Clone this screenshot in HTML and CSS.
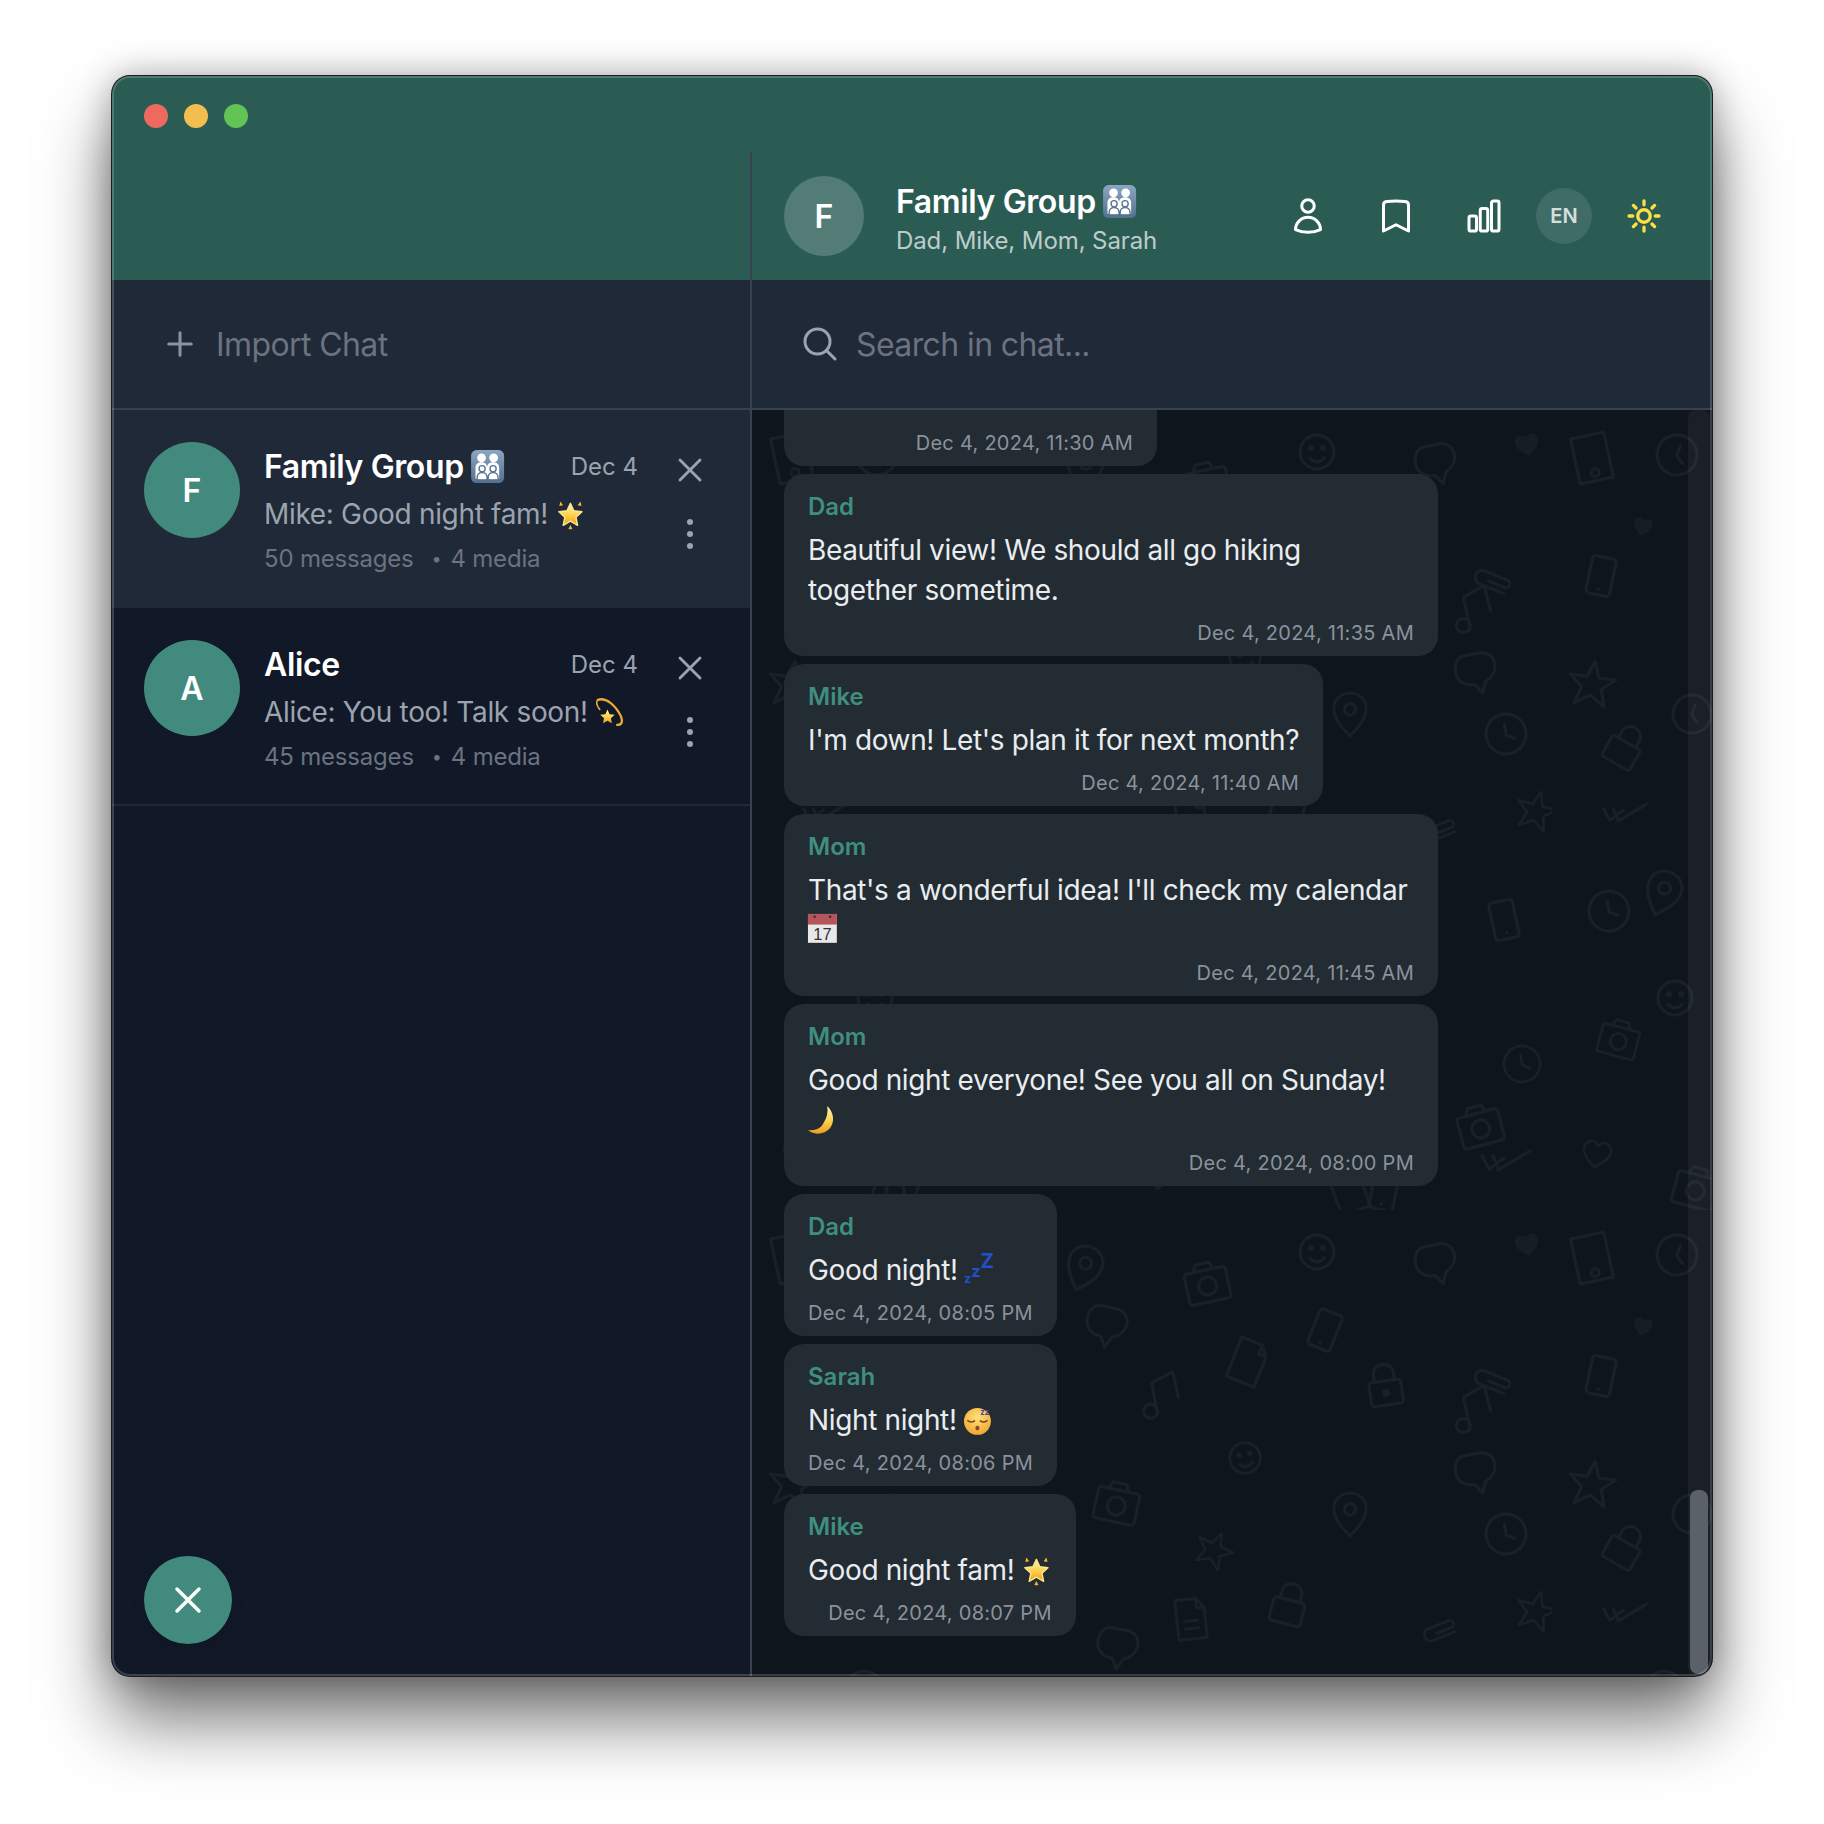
FILE: index.html
```html
<!doctype html>
<html lang="en">
<head>
  <title>Chat Viewer</title>
  <meta charset="UTF-8">
  <meta name="viewport" content="width=device-width, initial-scale=1">
  <link rel="stylesheet" href="styles.css">
</head>
<body>
  <!-- emoji drawings, used from the text below -->
  <svg class="sprite" aria-hidden="true">
    <defs>
      <linearGradient id="g-family" x1="0" y1="0" x2="0" y2="1">
        <stop offset="0" stop-color="#8ba6c0"/><stop offset="1" stop-color="#54708f"/>
      </linearGradient>
      <linearGradient id="g-gold" x1="0" y1="0" x2="0" y2="1">
        <stop offset="0" stop-color="#fff6b8"/><stop offset=".55" stop-color="#fdd04a"/><stop offset="1" stop-color="#ee9a1c"/>
      </linearGradient>
      <radialGradient id="g-face" cx=".5" cy=".35" r=".7">
        <stop offset="0" stop-color="#ffe27a"/><stop offset="1" stop-color="#f2a22a"/>
      </radialGradient>
    </defs>
    <symbol id="e-family" viewBox="0 0 32 32">
      <rect x="1" y="1" width="30" height="30" rx="5" fill="url(#g-family)"/>
      <g fill="#fff">
        <circle cx="10.5" cy="8" r="4"/><circle cx="21.5" cy="8" r="4"/>
        <path d="M5 27V17c0-3 2-5 5.500-5s5 2 5 5c0-3 2-5 5.500-5s5.500 2 5.500 5v10z"/>
      </g>
      <g fill="#fff" stroke="#54708f" stroke-width="1.200">
        <circle cx="11" cy="18" r="2.800"/><circle cx="21" cy="18" r="2.800"/>
        <path d="M6.500 28v-2c0-3 2-4.500 4.500-4.500s4.500 1.500 4.500 4.500v2zM16.500 28v-2c0-3 2-4.500 4.500-4.500s4.500 1.500 4.500 4.500v2z"/>
      </g>
    </symbol>
    <symbol id="e-star" viewBox="0 0 32 32">
      <path d="M16 4.500l3.600 7.800 8.400 1-6.200 5.700 1.700 8.300-7.500-4.200-7.500 4.200 1.700-8.300L4 13.300l8.400-1z" fill="url(#g-gold)" stroke="#fde68a" stroke-width="1.500" stroke-linejoin="round"/>
      <path d="M5.500 2.500l3 4-4 .8zM26.500 2.500l-3 4 4 .8zM16 27l2.200 4.500h-4.400z" fill="#f7b733"/>
    </symbol>
    <symbol id="e-dizzy" viewBox="0 0 32 32">
      <path d="M4 3c8-3 18 5 24 17 2 6 1 9-4 9" fill="none" stroke="#eca92b" stroke-width="2.400" stroke-linecap="round"/>
      <path d="M4 3c-2 2-1 6 2 10" fill="none" stroke="#eca92b" stroke-width="1.600" stroke-linecap="round"/>
      <path d="M14 13l2.200 4.900 5.300.6-3.900 3.600 1 5.200-4.600-2.600-4.600 2.600 1-5.200-3.900-3.600 5.300-.6z" fill="url(#g-gold)"/>
    </symbol>
    <symbol id="e-moon" viewBox="0 0 32 32">
      <path d="M21 1c7 7 8 16 3 23-6 7-16 8-23 2 7 1 13-1 16-7 4-6 5-12 4-18z" fill="url(#g-gold)"/>
    </symbol>
    <!-- wallpaper doodles, drawn around 0,0 -->
    <defs>
      <g id="d-pin"><path d="M0-22c-10 0-17 7-17 16C-17 6-7 16 0 23 7 16 17 6 17-6 17-15 10-22 0-22z"/><circle cy="-5" r="6"/></g>
      <g id="d-camera"><rect x="-21" y="-13" width="42" height="32" rx="3"/><path d="M-11-13l3-7h14l3 7"/><circle cy="3" r="9"/></g>
      <g id="d-smile"><circle r="17"/><circle cx="-6" cy="-4" r="3" class="solid"/><circle cx="6" cy="-4" r="3" class="solid"/><path d="M-7 6c3 5 11 5 14 0"/></g>
      <g id="d-bubble"><path d="M-9-19H7C15-19 20-13 20-6S15 7 8 10L3 21-3 11C-13 11-20 5-20-4S-15-19-9-19z"/></g>
      <g id="d-heart"><path class="solid-faint" d="M0 18C-10 10-17 4-17-4-17-10-12-14-8-14-4-14-2-12 0-9 2-12 4-14 8-14 12-14 17-10 17-4 17 4 10 10 0 18z"/></g>
      <g id="d-heartline"><path d="M0 18C-10 10-17 4-17-4-17-10-12-14-8-14-4-14-2-12 0-9 2-12 4-14 8-14 12-14 17-10 17-4 17 4 10 10 0 18z"/></g>
      <g id="d-tablet"><rect x="-17" y="-23" width="34" height="46"/><circle cy="15" r="4"/></g>
      <g id="d-clock"><circle r="20"/><path d="M0-10V1L8 6"/></g>
      <g id="d-phone"><rect x="-12" y="-19" width="24" height="38" rx="3"/><circle cy="13" r="1.500" class="solid"/></g>
      <g id="d-file"><path d="M-15-21H7L15-11V21H-15zM7-21V-11H15"/></g>
      <g id="d-doc"><path d="M-15-21H7L15-11V21H-15zM7-21V-11H15M-7 2H7M-7 10H7"/></g>
      <g id="d-music"><circle cx="-12" cy="16" r="7"/><path d="M-6 16L-8-12 14-21 17 5"/></g>
      <g id="d-lock"><rect x="-16" y="-4" width="32" height="24" rx="3"/><path d="M-10-4V-11C-10-24 10-24 10-11V-4"/></g>
      <g id="d-lockdot"><rect x="-16" y="-4" width="32" height="24" rx="3"/><path d="M-10-4V-11C-10-24 10-24 10-11V-4"/><circle cy="8" r="4" class="solid"/></g>
      <g id="d-clip"><path d="M-5 3H12C18 3 18-5 12-5H-12C-21-5-21 9-12 9H14"/></g>
      <g id="d-star"><path d="M0-23L6-7 23-7 10 4 15 21 0 11-15 21-10 4-23-7-6-7z"/></g>
      <g id="d-check"><path d="M-24-5L-17 8-2-3M-8 9L24-10M-13-5L-7 9"/></g>
      <pattern id="doodles" x="0" y="0" width="800" height="800" patternUnits="userSpaceOnUse">
        <g class="doodle">
          <use href="#d-pin" transform="translate(332 58) rotate(20)"/>
          <use href="#d-camera" transform="translate(455 73) rotate(-12)"/>
          <use href="#d-smile" transform="translate(565 42)"/>
          <use href="#d-bubble" transform="translate(684 54) rotate(-12)"/>
          <use href="#d-heart" transform="translate(775 34) rotate(-10) scale(.68)"/>
          <use href="#d-tablet" transform="translate(40 48) rotate(-12)"/>
          <use href="#d-clock" transform="translate(125 45) rotate(20)"/>
          <use href="#d-bubble" transform="translate(354 116) rotate(12)"/>
          <use href="#d-phone" transform="translate(573 120) rotate(22)"/>
          <use href="#d-file" transform="translate(496 152) rotate(22)"/>
          <use href="#d-heart" transform="translate(91 116) rotate(15) scale(.55)"/>
          <use href="#d-phone" transform="translate(49 166) rotate(12)"/>
          <use href="#d-music" transform="translate(409 184) rotate(-6)"/>
          <use href="#d-lockdot" transform="translate(633 175) rotate(-8)"/>
          <use href="#d-clip" transform="translate(742 170) rotate(22)"/>
          <use href="#d-music" transform="translate(721 198) rotate(-8)"/>
          <use href="#d-smile" transform="translate(493 248) rotate(-10) scale(.9)"/>
          <use href="#d-bubble" transform="translate(724 263) rotate(-10)"/>
          <use href="#d-star" transform="translate(40 274) rotate(8)"/>
          <use href="#d-camera" transform="translate(365 293) rotate(12)"/>
          <use href="#d-pin" transform="translate(598 304) scale(.95)"/>
          <use href="#d-clock" transform="translate(754 324) rotate(-10)"/>
          <use href="#d-lock" transform="translate(73 336) rotate(30)"/>
          <use href="#d-clock" transform="translate(140 304) rotate(20) scale(.95)"/>
          <use href="#d-star" transform="translate(462 340) rotate(25) scale(.8)"/>
          <use href="#d-lock" transform="translate(537 394) rotate(15)"/>
          <use href="#d-doc" transform="translate(439 409) rotate(-6) scale(.95)"/>
          <use href="#d-clip" transform="translate(688 419) rotate(-22) scale(.9)"/>
          <use href="#d-star" transform="translate(784 401) rotate(15) scale(.85)"/>
          <use href="#d-check" transform="translate(73 403) scale(.9)"/>
          <use href="#d-bubble" transform="translate(365 438) rotate(10)"/>
          <use href="#d-pin" transform="translate(111 483) rotate(20)"/>
          <use href="#d-clock" transform="translate(57 501) rotate(-10)"/>
          <use href="#d-phone" transform="translate(752 510) rotate(-12)"/>
          <use href="#d-smile" transform="translate(123 588)"/>
          <use href="#d-camera" transform="translate(67 629) rotate(15) scale(.9)"/>
          <use href="#d-clock" transform="translate(770 654) rotate(-10) scale(.9)"/>
          <use href="#d-camera" transform="translate(728 716) rotate(-15)"/>
          <use href="#d-heartline" transform="translate(45 743) rotate(10) scale(.8)"/>
          <use href="#d-check" transform="translate(754 751)"/>
          <use href="#d-camera" transform="translate(144 778) rotate(15)"/>
          <use href="#d-pin" transform="translate(406 756)"/>
          <use href="#d-file" transform="translate(597 781) rotate(-20)"/>
          <use href="#d-phone" transform="translate(632 781) rotate(12)"/>
        </g>
      </pattern>
    </defs>
  </svg>

  <div class="window">
    <div class="titlebar">
      <span class="light light-red"></span>
      <span class="light light-yellow"></span>
      <span class="light light-green"></span>
    </div>
    <div class="panes">
      <aside class="sidebar">
        <div class="sidebar-top"></div>
        <div class="import-row">
          <svg class="icon-import" viewBox="0 0 24 24"><path d="M12 4.500v15m7.500-7.500h-15"/></svg>
          <span class="import-text">Import Chat</span>
        </div>
        <div class="chat-item chat-item-active">
          <div class="avatar">F</div>
          <div class="chat-info">
            <div class="chat-row">
              <span class="chat-name">Family Group <svg class="emoji" role="img" aria-label="family"><use href="#e-family"/></svg></span>
              <span class="chat-date">Dec 4</span>
            </div>
            <div class="chat-preview">Mike: Good night fam! <svg class="emoji" role="img" aria-label="glowing star"><use href="#e-star"/></svg></div>
            <div class="chat-meta"><span>50 messages</span><span class="meta-sep">•</span><span>4 media</span></div>
          </div>
          <div class="chat-actions">
            <svg class="icon-action" viewBox="0 0 24 24"><path d="M6 18 18 6M6 6l12 12"/></svg>
            <svg class="icon-action icon-dots" viewBox="0 0 40 40"><circle cx="20" cy="8" r="3"/><circle cx="20" cy="20" r="3"/><circle cx="20" cy="32" r="3"/></svg>
          </div>
        </div>
        <div class="chat-item">
          <div class="avatar">A</div>
          <div class="chat-info">
            <div class="chat-row">
              <span class="chat-name">Alice</span>
              <span class="chat-date">Dec 4</span>
            </div>
            <div class="chat-preview">Alice: You too! Talk soon! <svg class="emoji" role="img" aria-label="dizzy"><use href="#e-dizzy"/></svg></div>
            <div class="chat-meta"><span>45 messages</span><span class="meta-sep">•</span><span>4 media</span></div>
          </div>
          <div class="chat-actions">
            <svg class="icon-action" viewBox="0 0 24 24"><path d="M6 18 18 6M6 6l12 12"/></svg>
            <svg class="icon-action icon-dots" viewBox="0 0 40 40"><circle cx="20" cy="8" r="3"/><circle cx="20" cy="20" r="3"/><circle cx="20" cy="32" r="3"/></svg>
          </div>
        </div>
        <button type="button" class="fab">
          <svg viewBox="0 0 24 24"><path d="M6 18 18 6M6 6l12 12"/></svg>
        </button>
      </aside>

      <main class="chat">
        <header class="chat-header">
          <div class="header-avatar">F</div>
          <div class="header-info">
            <div class="header-title">Family Group <svg class="emoji" role="img" aria-label="family"><use href="#e-family"/></svg></div>
            <div class="header-members">Dad, Mike, Mom, Sarah</div>
          </div>
          <div class="header-actions">
            <button type="button" class="header-btn">
              <svg viewBox="0 0 24 24"><path d="M15.750 6a3.750 3.750 0 1 1-7.500 0 3.750 3.750 0 0 1 7.500 0ZM4.501 20.118a7.500 7.500 0 0 1 14.998 0A17.933 17.933 0 0 1 12 21.750c-2.676 0-5.216-.584-7.499-1.632Z"/></svg>
            </button>
            <button type="button" class="header-btn">
              <svg viewBox="0 0 24 24"><path d="M17.593 3.322c1.100.128 1.907 1.077 1.907 2.185V21L12 17.250 4.500 21V5.507c0-1.108.806-2.057 1.907-2.185a48.507 48.507 0 0 1 11.186 0Z"/></svg>
            </button>
            <button type="button" class="header-btn">
              <svg viewBox="0 0 24 24"><path d="M3 13.125C3 12.504 3.504 12 4.125 12h2.250c.621 0 1.125.504 1.125 1.125v6.750C7.500 20.496 6.996 21 6.375 21h-2.250A1.125 1.125 0 0 1 3 19.875v-6.750ZM9.750 8.625c0-.621.504-1.125 1.125-1.125h2.250c.621 0 1.125.504 1.125 1.125v11.250c0 .621-.504 1.125-1.125 1.125h-2.250a1.125 1.125 0 0 1-1.125-1.125V8.625ZM16.500 4.125c0-.621.504-1.125 1.125-1.125h2.250C20.496 3 21 3.504 21 4.125v15.750c0 .621-.504 1.125-1.125 1.125h-2.250a1.125 1.125 0 0 1-1.125-1.125V4.125Z"/></svg>
            </button>
            <div class="lang-btn">EN</div>
            <button type="button" class="header-btn header-btn-sun">
              <svg viewBox="0 0 24 24"><path d="M12 3v2.250m6.364.386-1.591 1.591M21 12h-2.250m-.386 6.364-1.591-1.591M12 18.750V21m-4.773-4.227-1.591 1.591M5.250 12H3m4.227-4.773L5.636 5.636M15.750 12a3.750 3.750 0 1 1-7.500 0 3.750 3.750 0 0 1 7.500 0Z"/></svg>
            </button>
          </div>
        </header>
        <div class="search-row">
          <svg class="icon-search" viewBox="0 0 24 24"><path d="m21 21-5.197-5.197m0 0A7.500 7.500 0 1 0 5.196 5.196a7.500 7.500 0 0 0 10.607 10.607Z"/></svg>
          <span class="search-text">Search in chat...</span>
        </div>
        <div class="messages">
          <svg class="wallpaper" aria-hidden="true"><rect width="100%" height="100%" fill="url(#doodles)"/></svg>
          <div class="msg msg-cut">
            <div class="msg-time">Dec 4, 2024, 11:30 AM</div>
          </div>
          <div class="msg">
            <div class="msg-sender">Dad</div>
            <div class="msg-text">Beautiful view! We should all go hiking together sometime.</div>
            <div class="msg-time">Dec 4, 2024, 11:35 AM</div>
          </div>
          <div class="msg">
            <div class="msg-sender">Mike</div>
            <div class="msg-text">I'm down! Let's plan it for next month?</div>
            <div class="msg-time">Dec 4, 2024, 11:40 AM</div>
          </div>
          <div class="msg">
            <div class="msg-sender">Mom</div>
            <div class="msg-text">That's a wonderful idea! I'll check my calendar <svg class="emoji emoji-up" viewBox="0 0 32 32" role="img" aria-label="calendar"><rect x="1" y="1" width="30" height="30" fill="#e8e8e8"/><rect x="1" y="1" width="30" height="11" fill="#b5545a"/><circle cx="8" cy="4" r="1.300" fill="#333"/><circle cx="24" cy="4" r="1.300" fill="#333"/><text x="16" y="28" text-anchor="middle" class="emoji-num">17</text></svg></div>
            <div class="msg-time">Dec 4, 2024, 11:45 AM</div>
          </div>
          <div class="msg">
            <div class="msg-sender">Mom</div>
            <div class="msg-text">Good night everyone! See you all on Sunday! <svg class="emoji" role="img" aria-label="crescent moon"><use href="#e-moon"/></svg></div>
            <div class="msg-time">Dec 4, 2024, 08:00 PM</div>
          </div>
          <div class="msg">
            <div class="msg-sender">Dad</div>
            <div class="msg-text">Good night! <svg class="emoji emoji-open" viewBox="0 0 32 32" role="img" aria-label="zzz"><text x="0" y="29" class="emoji-z"><tspan class="emoji-z-s">z</tspan><tspan class="emoji-z-m" dy="-6">z</tspan><tspan class="emoji-z-l" dy="-9">Z</tspan></text></svg></div>
            <div class="msg-time">Dec 4, 2024, 08:05 PM</div>
          </div>
          <div class="msg">
            <div class="msg-sender">Sarah</div>
            <div class="msg-text">Night night! <svg class="emoji" viewBox="0 0 32 32" role="img" aria-label="sleeping face"><circle cx="15" cy="17" r="14" fill="url(#g-face)"/><path d="M5 16c2 2 5 2 7 .5M18 16.500c2 1.500 5 1.500 7-.5" fill="none" stroke="#6b4a1d" stroke-width="1.500" stroke-linecap="round"/><ellipse cx="15" cy="24" rx="2.200" ry="2.500" fill="#8a4a22"/><text x="18" y="10" class="emoji-z emoji-z-t">zz</text></svg></div>
            <div class="msg-time">Dec 4, 2024, 08:06 PM</div>
          </div>
          <div class="msg">
            <div class="msg-sender">Mike</div>
            <div class="msg-text">Good night fam! <svg class="emoji" role="img" aria-label="glowing star"><use href="#e-star"/></svg></div>
            <div class="msg-time">Dec 4, 2024, 08:07 PM</div>
          </div>
          <div class="scroll-track"><div class="scroll-thumb"></div></div>
        </div>
      </main>
    </div>
  </div>
</body>
</html>
```

FILE: styles.css
```css
* {
  box-sizing: border-box;
}
body {
  margin: 0;
  padding: 76px 112px 148px;
  background: #fff;
  font-family: 'Inter', 'Liberation Sans', sans-serif;
  color: #fff;
}
button {
  border: none;
  background: none;
  padding: 0;
  font: inherit;
}
svg path {
  stroke-linecap: round;
  stroke-linejoin: round;
}
.sprite {
  position: absolute;
  width: 0;
  height: 0;
}
.emoji {
  width: 1.1em;
  height: 1.1em;
  margin-left: -1px;
  vertical-align: -0.2em;
}
.emoji-up {
  vertical-align: -0.14em;
}
.emoji-open {
  overflow: visible;
}
.emoji-num {
  font: 400 17px 'Liberation Sans', sans-serif;
  letter-spacing: 0;
  fill: #333;
}
.emoji-z {
  font-family: 'Inter', sans-serif;
  font-weight: 700;
  letter-spacing: 0;
  fill: #2350c8;
}
.emoji-z-s { font-size: 13px; }
.emoji-z-m { font-size: 17px; }
.emoji-z-l { font-size: 21px; }
.emoji-z-t { font-size: 8px; fill: #4b3fb0; }

/* window frame */
.window {
  position: relative;
  width: 1600px;
  height: 1600px;
  display: flex;
  flex-direction: column;
  border-radius: 18px;
  overflow: hidden;
  background: #111827;
  box-shadow: 0 0 0 1px #1c1c1c, 0 44px 70px rgba(0, 0, 0, 0.55), 0 0 34px rgba(0, 0, 0, 0.3);
}
.window::after {
  content: '';
  position: absolute;
  inset: 0;
  border-radius: 18px;
  border: 2px solid rgba(255, 255, 255, 0.18);
  pointer-events: none;
}
.titlebar {
  height: 76px;
  flex: none;
  display: flex;
  align-items: center;
  gap: 16px;
  padding: 4px 32px 0;
  background: #2a5c54;
}
.light {
  width: 24px;
  height: 24px;
  border-radius: 50%;
}
.light-red { background: #ee6a5f; }
.light-yellow { background: #f5bd4f; }
.light-green { background: #61c455; }
.panes {
  flex: 1;
  min-height: 0;
  display: flex;
}

/* left column */
.sidebar {
  position: relative;
  width: 640px;
  flex: none;
  border-right: 2px solid #374151;
  background: #111827;
}
.sidebar-top {
  height: 128px;
  background: #2a5c54;
}
.import-row {
  height: 130px;
  display: flex;
  align-items: center;
  gap: 18px;
  padding-left: 50px;
  background: #1f2937;
  border-bottom: 2px solid #374151;
}
.icon-import {
  width: 36px;
  height: 36px;
  fill: none;
  stroke: #8b92a0;
  stroke-width: 2;
}
.import-text {
  font-size: 32px;
  letter-spacing: -0.6px;
  color: #6b7280;
}
.chat-item {
  height: 198px;
  display: flex;
  gap: 24px;
  padding: 32px 32px 0;
  border-bottom: 2px solid #1f2937;
}
.chat-item-active {
  background: #1f2937;
}
.avatar {
  width: 96px;
  height: 96px;
  flex: none;
  display: flex;
  align-items: center;
  justify-content: center;
  border-radius: 50%;
  background: #438a7e;
  font-size: 32px;
  font-weight: 600;
}
.chat-info {
  flex: 1;
  min-width: 0;
}
.chat-row {
  display: flex;
  justify-content: space-between;
  align-items: center;
  height: 48px;
}
.chat-name {
  font-size: 32px;
  font-weight: 600;
  letter-spacing: -0.38px;
}
.chat-date {
  font-size: 24px;
  color: #9ca3af;
}
.chat-preview {
  margin-top: 2px;
  font-size: 28px;
  line-height: 44px;
  letter-spacing: -0.33px;
  color: #9ca3af;
  white-space: nowrap;
}
.chat-meta {
  display: flex;
  margin-top: 7px;
  font-size: 24px;
  line-height: 32px;
  letter-spacing: -0.2px;
  color: #6b7280;
}
.meta-sep {
  margin: 0 9px 0 18px;
  font-size: 18px;
}
.chat-actions {
  width: 56px;
  flex: none;
  display: flex;
  flex-direction: column;
  align-items: center;
  gap: 24px;
  padding-top: 8px;
}
.icon-action {
  width: 40px;
  height: 40px;
  fill: none;
  stroke: #9ca3af;
  stroke-width: 1.7;
}
.icon-dots {
  fill: #9ca3af;
  stroke: none;
}
.fab {
  position: absolute;
  left: 32px;
  bottom: 32px;
  width: 88px;
  height: 88px;
  display: flex;
  align-items: center;
  justify-content: center;
  border-radius: 50%;
  background: #438a7e;
  box-shadow: 0 4px 14px rgba(0, 0, 0, 0.12);
}
.fab svg {
  width: 44px;
  height: 44px;
  fill: none;
  stroke: #fff;
  stroke-width: 1.9;
}

/* right column */
.chat {
  flex: 1;
  min-width: 0;
  display: flex;
  flex-direction: column;
}
.chat-header {
  height: 128px;
  flex: none;
  display: flex;
  align-items: center;
  padding: 0 32px;
  background: #2a5c54;
}
.header-avatar {
  width: 80px;
  height: 80px;
  flex: none;
  display: flex;
  align-items: center;
  justify-content: center;
  border-radius: 50%;
  background: rgba(255, 255, 255, 0.2);
  font-size: 32px;
  font-weight: 600;
}
.header-info {
  flex: 1;
  margin: 6px 0 0 32px;
}
.header-title {
  font-size: 32px;
  font-weight: 600;
  line-height: 44px;
  letter-spacing: -0.38px;
}
.header-members {
  font-size: 24px;
  line-height: 34px;
  letter-spacing: -0.1px;
  color: rgba(255, 255, 255, 0.7);
}
.header-actions {
  display: flex;
  align-items: center;
  gap: 16px;
}
.header-btn {
  width: 72px;
  height: 72px;
  display: flex;
  align-items: center;
  justify-content: center;
}
.header-btn svg {
  width: 40px;
  height: 40px;
  fill: none;
  stroke: #fff;
  stroke-width: 1.8;
}
.header-btn-sun svg {
  stroke: #fde047;
  stroke-width: 2;
}
.lang-btn {
  width: 56px;
  height: 56px;
  display: flex;
  align-items: center;
  justify-content: center;
  border-radius: 50%;
  background: rgba(255, 255, 255, 0.1);
  font-size: 20px;
  font-weight: 600;
  color: rgba(255, 255, 255, 0.8);
}
.search-row {
  height: 130px;
  flex: none;
  display: flex;
  align-items: center;
  gap: 16px;
  padding-left: 48px;
  background: #1f2937;
  border-bottom: 2px solid #374151;
}
.icon-search {
  width: 40px;
  height: 40px;
  fill: none;
  stroke: #9ca3af;
  stroke-width: 1.8;
}
.search-text {
  font-size: 32px;
  letter-spacing: -0.6px;
  color: #6b7280;
}

/* message list, anchored to its last message as if scrolled to the end */
.messages {
  position: relative;
  flex: 1;
  min-height: 0;
  overflow: hidden;
  display: flex;
  flex-direction: column;
  justify-content: flex-end;
  align-items: flex-start;
  gap: 8px;
  padding: 0 32px 40px;
  background: #0f151c;
}
.wallpaper {
  position: absolute;
  inset: 0;
  width: 100%;
  height: 100%;
}
.doodle {
  fill: none;
  stroke: #192027;
  stroke-width: 3;
  stroke-linecap: round;
  stroke-linejoin: round;
}
.solid {
  fill: #192027;
  stroke: none;
}
.solid-faint {
  fill: #161d24;
  stroke: none;
}
.msg {
  position: relative;
  flex: none;
  max-width: 654px;
  padding: 17px 24px 8px;
  border-radius: 20px;
  background: #232b33;
}
.msg-cut {
  width: 373px;
  height: 142px;
  display: flex;
  flex-direction: column;
  justify-content: flex-end;
}
.msg-sender {
  margin-bottom: 7px;
  font-size: 24px;
  font-weight: 600;
  line-height: 32px;
  color: #3f8f7f;
}
.msg-text {
  font-size: 28px;
  line-height: 40px;
  letter-spacing: -0.36px;
  color: #e9edef;
}
.msg-time {
  margin-top: 8px;
  font-size: 20px;
  line-height: 30px;
  letter-spacing: 0.27px;
  text-align: right;
  color: #8b929c;
}
.scroll-track {
  position: absolute;
  top: 0;
  right: 2px;
  bottom: 0;
  width: 22px;
  padding: 0 2px 2px;
  display: flex;
  flex-direction: column;
  justify-content: flex-end;
  background: rgba(255, 255, 255, 0.05);
  border-radius: 8px;
}
.scroll-thumb {
  height: 184px;
  border-radius: 8px;
  background: #5a6168;
}
```
